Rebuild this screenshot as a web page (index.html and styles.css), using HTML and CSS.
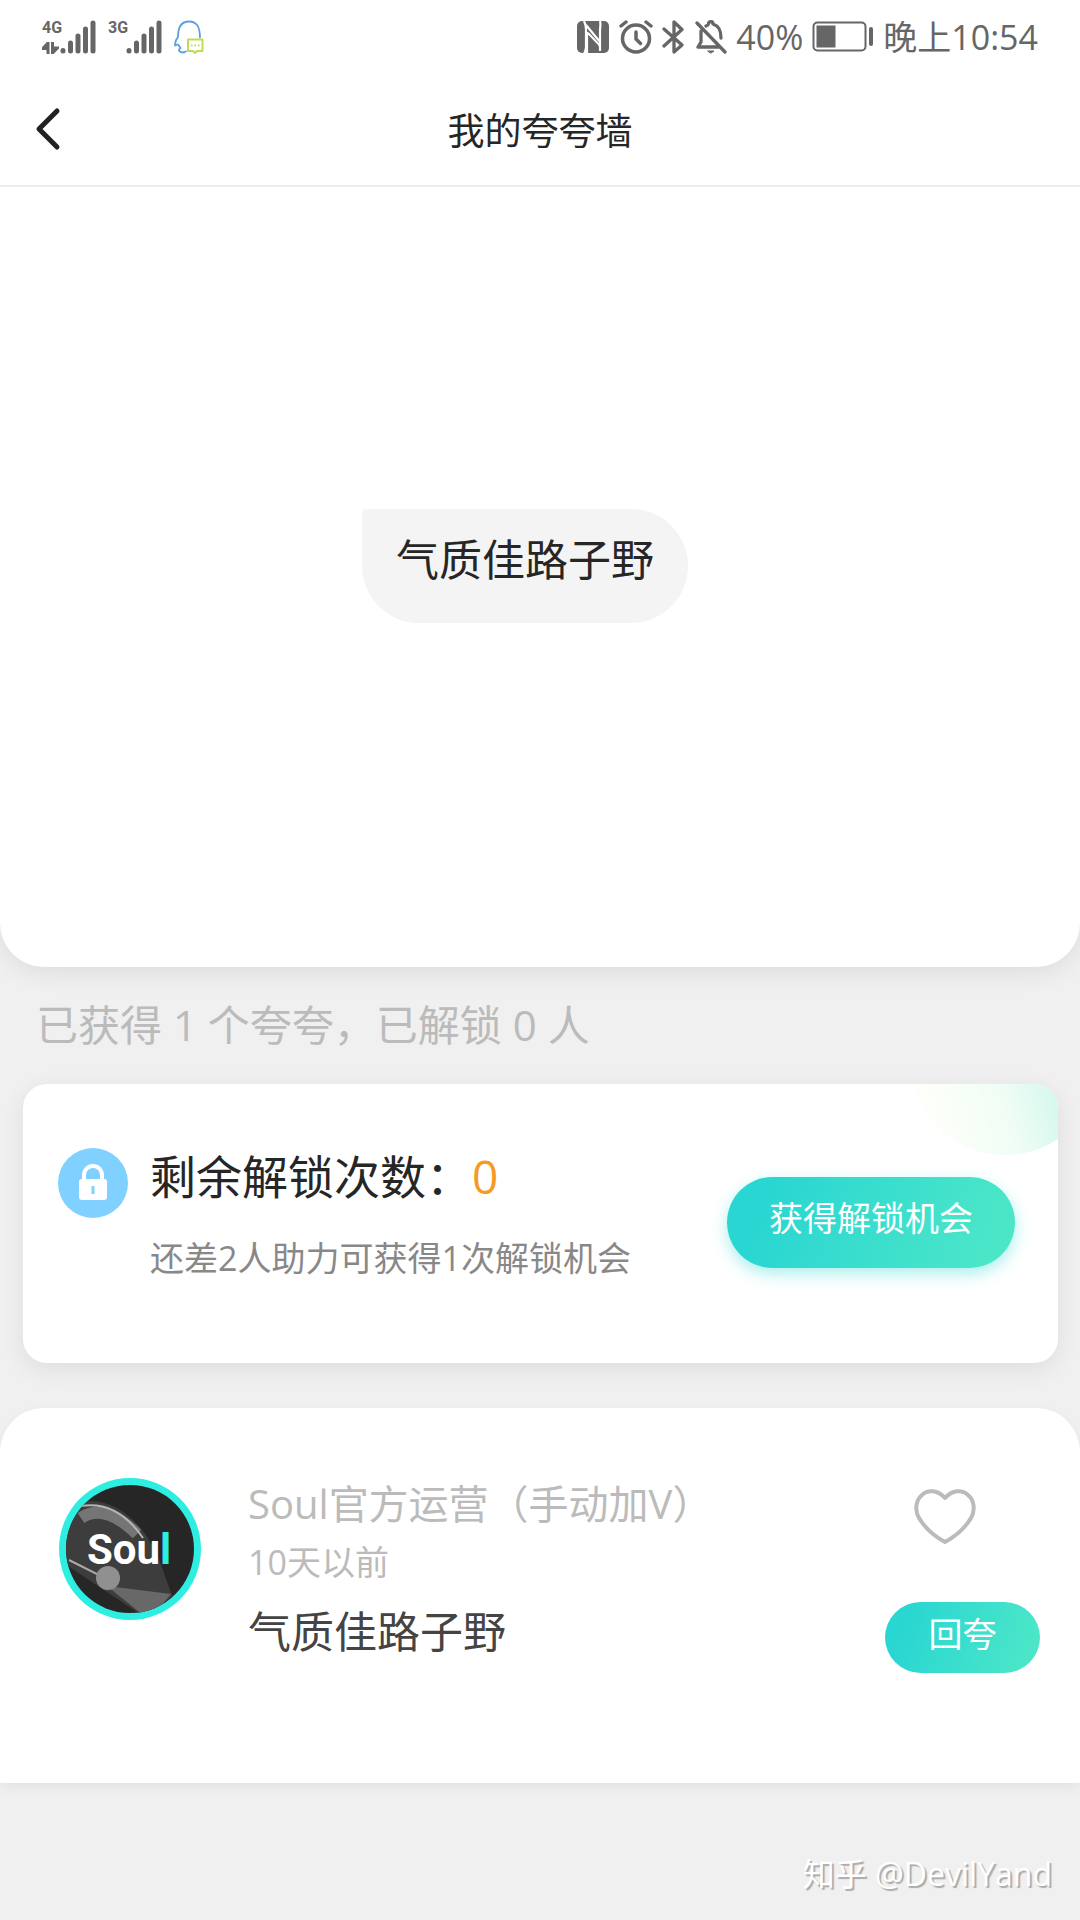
FILE: index.html
```html
<!DOCTYPE html>
<html lang="zh-CN">
<head>
<meta charset="utf-8">
<meta name="viewport" content="width=device-width, initial-scale=1">
<title>我的夸夸墙</title>
<link rel="stylesheet" href="styles.css">
</head>
<body>
<div class="page">
  <div class="top">
    <div class="status">
      <div class="status-group">
        <div class="signal">
          <div class="signal-side">
            <span class="net">4G</span>
            <svg width="17" height="12" viewBox="0 0 17 12" fill="none" stroke="#666" stroke-width="3"><path d="M6 12V1L1 6.500H6M10.500 0V11L15.500 6H10.500"/></svg>
          </div>
          <svg width="36" height="34" viewBox="0 0 36 34" stroke="#666" stroke-width="5" stroke-linecap="round"><path d="M3 30.500v.5M10.500 23v8M18 16v15M25.500 9v22M33 3v28"/></svg>
        </div>
        <div class="signal">
          <div class="signal-side"><span class="net">3G</span></div>
          <svg width="36" height="34" viewBox="0 0 36 34" stroke="#666" stroke-width="5" stroke-linecap="round"><path d="M3 30.500v.5M10.500 23v8M18 16v15M25.500 9v22M33 3v28"/></svg>
        </div>
        <svg width="30" height="34" viewBox="0 0 30 34" fill="none" stroke-linejoin="round"><path d="M26 18C26 7 23 1.500 15 1.500S4 8 4 17C1.500 20 1 23 1 25.500L4 24.500 6.500 28C3.500 30 5 32.500 10 32.500L12.500 31" stroke="#5b9fe0" stroke-width="1.800"/><path d="M14 19.500H28.500V31H23L21 33 19 31H14Z" stroke="#bddc55" stroke-width="2"/><path d="M17 25.500h1.500M20.500 25.500H22M24 25.500h1.500" stroke="#bddc55" stroke-width="2"/></svg>
      </div>
      <div class="status-group status-right">
        <svg width="34" height="34" viewBox="0 0 34 34"><rect x="1" y="1" width="32" height="32" rx="5" fill="#666"/><path d="M8 1C9 3 10 5 10 9V27C10 30 9 32 8 34M10 5L24 22M11 12V33M24 1C25 4 24 7 24 11V25M12 13L24 26M24 22V31" fill="none" stroke="#fff" stroke-width="2.200"/><path d="M13 16L22 25V31L13 22Z" fill="#666"/></svg>
        <svg width="34" height="34" viewBox="0 0 34 34" fill="none" stroke="#666" stroke-width="3.500" stroke-linecap="round" stroke-linejoin="round"><circle cx="17" cy="18.500" r="13.500"/><path d="M2 6L7 2M32 6L27 2"/><path d="M17 12V19L21.500 23.500"/></svg>
        <svg width="24" height="34" viewBox="0 0 24 34" fill="none" stroke="#666" stroke-width="3.300" stroke-linecap="round" stroke-linejoin="round"><path d="M2 9L20 25 12 32V2L20 9.500 2 26"/></svg>
        <svg width="32" height="34" viewBox="0 0 32 34" fill="none" stroke="#666" stroke-width="3.300" stroke-linecap="round" stroke-linejoin="round"><path d="M2 3L30 32M6 11V22L3 27H25M11 6C13 5 13.500 5 13.500 3.500 14 1 18 1 18 4 24 6 26 10 26 18"/><path d="M13 31H19L16 33Z" fill="#666" stroke-width="1"/></svg>
        <span class="status-text">40%</span>
        <svg width="62" height="32" viewBox="0 0 62 32"><rect x="1.500" y="1.500" width="52" height="28" rx="4" fill="none" stroke="#666" stroke-width="2"/><rect x="4.500" y="4.500" width="19" height="22" fill="#666"/><rect x="57" y="6" width="4" height="19" rx="2" fill="#666"/></svg>
        <span class="status-text">晚上10:54</span>
      </div>
    </div>
    <header class="bar">
      <button class="back" type="button" aria-label="返回"><svg width="26" height="44" viewBox="0 0 26 44" fill="none" stroke="#222" stroke-width="5" stroke-linecap="round" stroke-linejoin="round"><path d="M22 4L4 22 22 40"/></svg></button>
      <h1 class="title">我的夸夸墙</h1>
    </header>
    <section class="wall">
      <p class="bubble">气质佳路子野</p>
    </section>
  </div>

  <p class="summary">已获得 1 个夸夸，已解锁 0 人</p>

  <section class="unlock">
    <span class="glow"></span>
    <svg width="70" height="70" viewBox="0 0 70 70"><circle cx="35" cy="35" r="35" fill="#80d1ff"/><path d="M26 34V27a9 9 0 0 1 18 0V34" fill="none" stroke="#fff" stroke-width="4"/><rect x="21" y="31" width="28" height="21" rx="3" fill="#fff"/><path d="M35 38v8" stroke="#80d1ff" stroke-width="3"/></svg>
    <div class="unlock-text">
      <h2 class="unlock-title">剩余解锁次数：<span class="count">0</span></h2>
      <p class="unlock-note">还差2人助力可获得1次解锁机会</p>
    </div>
    <button class="pill pill-large" type="button">获得解锁机会</button>
  </section>

  <article class="praise">
    <svg width="142" height="142" viewBox="0 0 142 142" role="img" aria-label="Soul">
      <defs><clipPath id="disc"><circle cx="71" cy="71" r="64"/></clipPath></defs>
      <circle cx="71" cy="71" r="71" fill="#2deee0"/>
      <g clip-path="url(#disc)">
        <rect width="142" height="142" fill="#262626"/>
        <path d="M0 30C45 8 88 38 106 98L122 142H90L0 82Z" fill="#3d3d3d"/>
        <path d="M22 40Q45 24 78 56" fill="none" stroke="#757575" stroke-width="12"/>
        <path d="M22 28Q58 22 84 60" fill="none" stroke="#b5b5b5" stroke-width="2"/>
        <path d="M10 82L42 98 82 133" fill="none" stroke="#aaa" stroke-width="2"/>
        <path d="M48 108L112 116 90 142Z" fill="#686868"/>
        <circle cx="49" cy="100" r="12" fill="#909090"/>
      </g>
      <text class="logo" x="28" y="86">Sou<tspan class="logo-tail">l</tspan></text>
    </svg>
    <div class="praise-body">
      <h3 class="name">Soul官方运营（手动加V）</h3>
      <time class="date">10天以前</time>
      <p class="message">气质佳路子野</p>
    </div>
    <div class="actions">
      <button class="like" type="button" aria-label="喜欢"><svg width="62" height="56" viewBox="0 0 62 56" fill="none" stroke="#bbb" stroke-width="4" stroke-linejoin="round"><path d="M31 9C24 1 14 0 8 6 1 12 1 22 5 29 11 39 20 47 31 53 42 47 51 39 57 29 61 22 61 12 54 6 48 0 38 1 31 9Z"/></svg></button>
      <button class="pill pill-small" type="button">回夸</button>
    </div>
  </article>

  <footer class="mark">知乎 @DevilYand</footer>
</div>
</body>
</html>
```

FILE: styles.css
```css
* {
  box-sizing: border-box;
}

body {
  margin: 0;
  background: #f0f0f0;
  color: #262626;
  font-family: "Open Sans", "Noto Sans CJK SC", sans-serif;
}

h1, h2, h3, p {
  margin: 0;
  font-weight: 400;
}

svg {
  display: block;
  flex: none;
}

button {
  border: 0;
  padding: 0;
  background: none;
  font: inherit;
  cursor: pointer;
}

.page {
  display: flex;
  flex-direction: column;
  min-height: 100vh;
}

.top {
  background: #fff;
  border-radius: 0 0 44px 44px;
  box-shadow: 0 6px 24px rgba(0, 0, 0, 0.08);
}

.status {
  display: flex;
  justify-content: space-between;
  align-items: center;
  height: 73px;
  padding: 0 42px;
  color: #666;
}

.status-group {
  display: flex;
  align-items: center;
  gap: 12px;
}

.status-right {
  gap: 9px;
}

.signal {
  display: flex;
}

.signal-side {
  display: flex;
  flex-direction: column;
  justify-content: space-between;
  width: 18px;
  height: 34px;
}

.net {
  font: 700 16px/16px Roboto, sans-serif;
}

.status-text {
  font-size: 34px;
  line-height: 40px;
}

.bar {
  display: grid;
  grid-template-columns: 80px 1fr 80px;
  align-items: center;
  height: 114px;
  border-bottom: 2px solid #ececec;
}

.back {
  display: flex;
  padding-left: 35px;
}

.title {
  padding-top: 4px;
  font-size: 37px;
  line-height: 48px;
  text-align: center;
}

.wall {
  display: flex;
  justify-content: center;
  align-items: center;
  height: 780px;
  padding: 0 30px 22px 0;
}

.bubble {
  padding: 19px 34px 31px;
  border-radius: 4px 57px 57px 57px;
  background: #f4f4f4;
  font-size: 43px;
  line-height: 64px;
}

.summary {
  padding: 26px 36px 27px;
  color: #bbb;
  font-size: 42px;
  line-height: 64px;
}

.unlock {
  position: relative;
  display: flex;
  align-items: flex-start;
  gap: 22px;
  min-height: 279px;
  margin: 0 22px 45px 23px;
  padding: 64px 43px 62px 35px;
  border-radius: 24px;
  background: #fff;
  box-shadow: 0 6px 24px rgba(0, 0, 0, 0.08);
  overflow: hidden;
}

.glow {
  position: absolute;
  top: -121px;
  right: -43px;
  width: 192px;
  height: 192px;
  border-radius: 50%;
  background: linear-gradient(75deg, #fffffa 10%, #f0fdf5 45%, #c0f4e8 85%);
}

.unlock-text {
  flex: 1;
}

.unlock-title {
  font-size: 46px;
  line-height: 56px;
}

.count {
  color: #f59a23;
}

.unlock-note {
  margin-top: 30px;
  color: #888;
  font-size: 34px;
  line-height: 48px;
}

.pill {
  display: flex;
  justify-content: center;
  border-radius: 46px;
  background: linear-gradient(110deg, #2ad6d2 15%, #4be6c8 90%);
  color: #fff;
  font-size: 34px;
  line-height: 48px;
}

.pill-large {
  position: relative;
  width: 288px;
  margin-top: 29px;
  padding: 17px 0 26px;
  box-shadow: 0 6px 16px rgba(42, 214, 210, 0.4);
}

.praise {
  display: flex;
  min-height: 375px;
  padding: 70px 40px 70px 59px;
  border-radius: 44px 44px 0 0;
  background: #fff;
  box-shadow: 0 4px 12px rgba(0, 0, 0, 0.06);
}

.logo {
  fill: #fff;
  font: 700 42px Roboto, sans-serif;
}

.logo-tail {
  fill: #2deee0;
}

.praise-body {
  flex: 1;
  margin-left: 47px;
}

.name {
  color: #bbb;
  font-size: 40px;
  line-height: 52px;
}

.date {
  display: block;
  margin-top: 8px;
  color: #bbb;
  font-size: 34px;
  line-height: 48px;
}

.message {
  margin-top: 14px;
  color: #444;
  font-size: 43px;
  line-height: 64px;
}

.actions {
  display: flex;
  flex-direction: column;
  gap: 57px;
  width: 155px;
  padding-top: 11px;
}

.like {
  display: flex;
  padding-left: 29px;
}

.pill-small {
  padding: 8px 0 15px;
}

.mark {
  padding: 67px 28px 44px;
  color: #fff;
  font-size: 32px;
  line-height: 48px;
  text-align: right;
  text-shadow: 2px 2px 1px #aaa;
}
```
